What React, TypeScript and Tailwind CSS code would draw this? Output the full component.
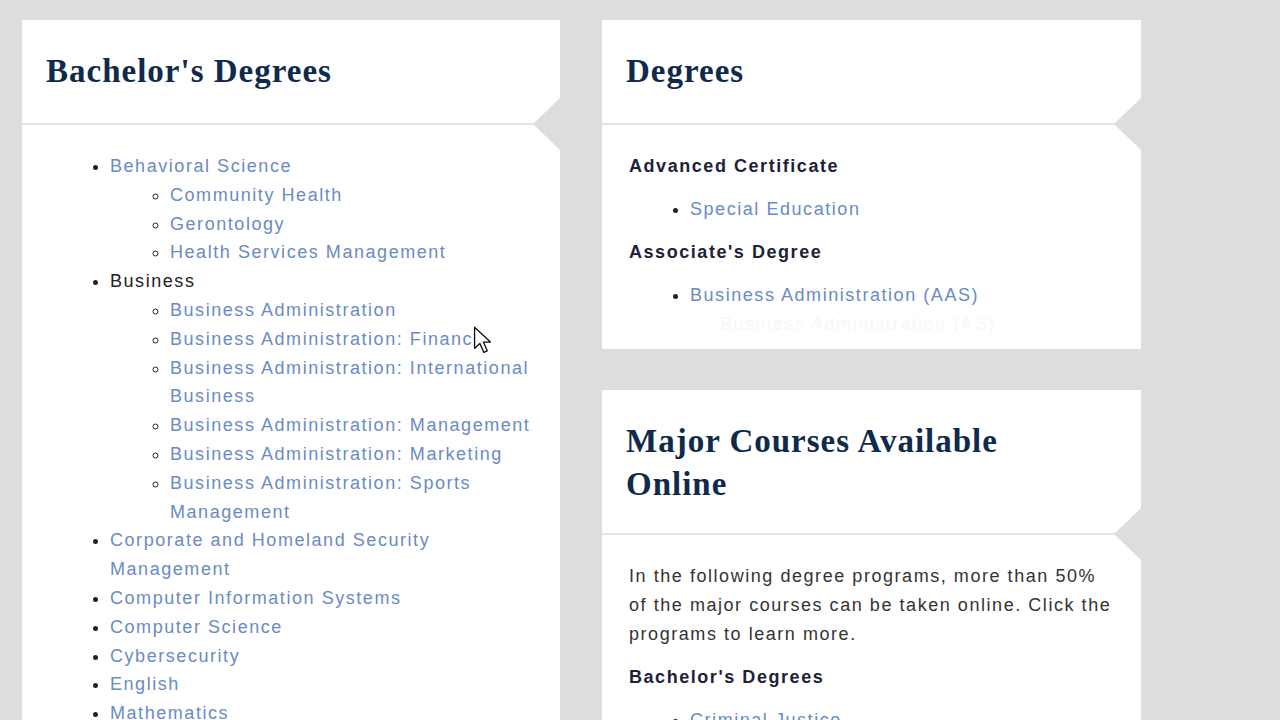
import type { ReactNode } from "react";

const link = "text-[#6a8bc3]";

function Notch() {
  // grey wedge cut into the card's right edge at the divider
  return (
    <div
      aria-hidden="true"
      className="pointer-events-none absolute right-0 top-[-25px] h-[52px] w-[27px] bg-[#dddddd] [clip-path:polygon(100%_0,0_50%,100%_100%)]"
    />
  );
}

type CardProps = {
  title: ReactNode;
  headerClass?: string;
  bodyClass?: string;
  children: ReactNode;
};

function Card({ title, headerClass = "pb-[30px]", bodyClass = "", children }: CardProps) {
  return (
    <section className="bg-white">
      <header className={`px-[24px] pt-[30px] ${headerClass}`}>
        <h2 className="font-['Liberation_Serif',serif] text-[33px] font-bold leading-[43px] tracking-[1px] text-[#0f2a4a]">
          {title}
        </h2>
      </header>
      <div className="relative h-[2px] bg-[#e4e4e4]">
        <Notch />
      </div>
      <div className={`pl-[27px] pt-[27px] ${bodyClass}`}>{children}</div>
    </section>
  );
}

function Label({ children, className = "" }: { children: ReactNode; className?: string }) {
  return <h3 className={`font-bold text-[#1d2238] ${className}`}>{children}</h3>;
}

const business = [
  "Business Administration",
  "Business Administration: Finance",
  "Business Administration: International Business",
  "Business Administration: Management",
  "Business Administration: Marketing",
  "Business Administration: Sports Management",
];

const tail = [
  "Corporate and Homeland Security Management",
  "Computer Information Systems",
  "Computer Science",
  "Cybersecurity",
  "English",
  "Mathematics",
  "Psychology",
];

function Cursor() {
  return (
    <svg
      aria-hidden="true"
      className="pointer-events-none absolute left-[473px] top-[326px]"
      width="19"
      height="29"
      viewBox="0 0 14 22"
    >
      <path
        d="M1 1 L1 17 L5 13.2 L8 20 L10.6 18.8 L7.7 12.2 L13 12.2 Z"
        fill="#fff"
        stroke="#111"
        strokeWidth="1"
        strokeLinejoin="round"
      />
    </svg>
  );
}

export default function App() {
  return (
    <div className="relative flex h-[720px] w-[1280px] gap-[42px] overflow-hidden bg-[#dddddd] pl-[22px] pt-[20px] font-['Liberation_Sans',Arial,sans-serif] text-[18px] leading-[29px] tracking-[1.55px] text-[#222]">
      <div className="w-[538px] shrink-0">
        <Card title="Bachelor's Degrees" bodyClass="pr-[12px] pb-[30px]">
          <ul className="list-disc pl-[61px] leading-[28.8px]">
            <li>
              <a className={link}>Behavioral Science</a>
              <ul className="list-[circle] pl-[60px]">
                <li><a className={link}>Community Health</a></li>
                <li><a className={link}>Gerontology</a></li>
                <li><a className={link}>Health Services Management</a></li>
              </ul>
            </li>
            <li>
              Business
              <ul className="list-[circle] pl-[60px]">
                {business.map((b) => (
                  <li key={b}><a className={link}>{b}</a></li>
                ))}
              </ul>
            </li>
            {tail.map((t) => (
              <li key={t}><a className={link}>{t}</a></li>
            ))}
          </ul>
        </Card>
      </div>

      <div className="flex w-[539px] shrink-0 flex-col gap-[41px]">
        <Card title="Degrees" bodyClass="h-[224px] overflow-hidden pr-[24px]">
          <Label>Advanced Certificate</Label>
          <ul className="mb-[14px] mt-[14px] list-disc pl-[61px]">
            <li><a className={link}>Special Education</a></li>
          </ul>
          <Label>Associate's Degree</Label>
          <ul className="mt-[14px] list-disc pl-[61px]">
            <li>
              <a className={link}>Business Administration (AAS)</a>
              <ul className="pl-[30px] text-[#f6f7fa]">
                <li>Business Administration (AS)</li>
              </ul>
            </li>
          </ul>
        </Card>

        <Card
          title={
            <>
              Major Courses Available
              <br />
              Online
            </>
          }
          headerClass="pb-[27px]"
          bodyClass="pr-[24px] pb-[30px]"
        >
          <p className="text-[#333]">
            In the following degree programs, more than 50% of the major courses can be taken online. Click the
            programs to learn more.
          </p>
          <Label className="mt-[14px]">Bachelor's Degrees</Label>
          <ul className="mt-[14px] list-disc pl-[61px]">
            <li><a className={link}>Criminal Justice</a></li>
            <li><a className={link}>Cybersecurity</a></li>
          </ul>
        </Card>
      </div>

      <Cursor />
    </div>
  );
}
